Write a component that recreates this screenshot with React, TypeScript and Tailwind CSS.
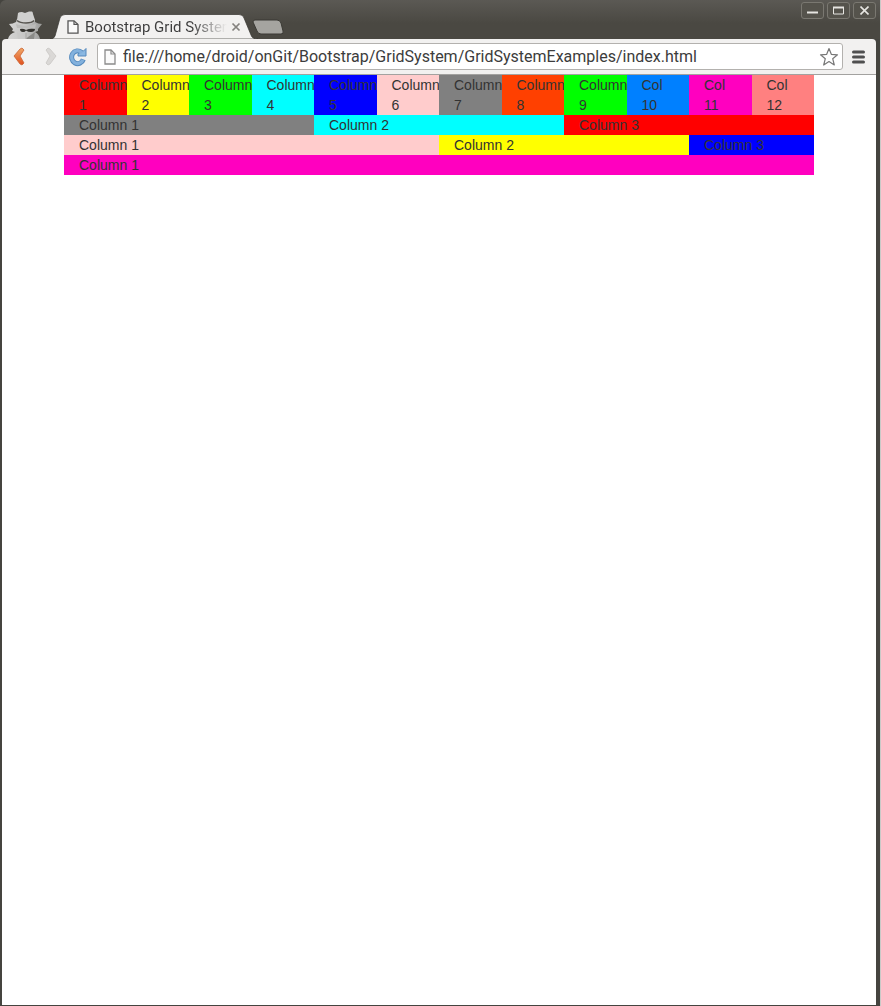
import React from "react";

type Column = { label: string; span: string; color: string };

const rows: Column[][] = [
  [
    { label: "Column 1", span: "col-span-1", color: "bg-[#ff0000]" },
    { label: "Column 2", span: "col-span-1", color: "bg-[#ffff00]" },
    { label: "Column 3", span: "col-span-1", color: "bg-[#00ff00]" },
    { label: "Column 4", span: "col-span-1", color: "bg-[#00ffff]" },
    { label: "Column 5", span: "col-span-1", color: "bg-[#0000ff]" },
    { label: "Column 6", span: "col-span-1", color: "bg-[#ffcccc]" },
    { label: "Column 7", span: "col-span-1", color: "bg-[#808080]" },
    { label: "Column 8", span: "col-span-1", color: "bg-[#ff4000]" },
    { label: "Column 9", span: "col-span-1", color: "bg-[#00ff00]" },
    { label: "Col 10", span: "col-span-1", color: "bg-[#0080ff]" },
    { label: "Col 11", span: "col-span-1", color: "bg-[#ff00bf]" },
    { label: "Col 12", span: "col-span-1", color: "bg-[#ff8080]" },
  ],
  [
    { label: "Column 1", span: "col-span-4", color: "bg-[#808080]" },
    { label: "Column 2", span: "col-span-4", color: "bg-[#00ffff]" },
    { label: "Column 3", span: "col-span-4", color: "bg-[#ff0000]" },
  ],
  [
    { label: "Column 1", span: "col-span-6", color: "bg-[#ffcccc]" },
    { label: "Column 2", span: "col-span-4", color: "bg-[#ffff00]" },
    { label: "Column 3", span: "col-span-2", color: "bg-[#0000ff]" },
  ],
  [{ label: "Column 1", span: "col-span-12", color: "bg-[#ff00bf]" }],
];

function Incognito() {
  return (
    <svg width="34" height="28" viewBox="0 0 34 28" className="block" aria-hidden="true">
      <defs>
        <linearGradient id="spy" x1="0" x2="1" y1="0" y2="0">
          <stop offset="0" stopColor="#d4d4d3" />
          <stop offset=".5" stopColor="#c6c6c5" />
          <stop offset="1" stopColor="#9b9b99" />
        </linearGradient>
      </defs>
      <path d="M0 28Q1 23 7 21L4 20 5 18 1 13Q5 13 8 11L9 8H26L27 11Q30 13 34 13L30 18 30 20 27 21Q31 23 32 28Z" fill="url(#spy)" />
      <path d="M9 9 10 2Q11 1 14 1L17 2 21 .5H24Q25 1 25 3L27 9Q27 13 18 13 8 13 9 9Z" fill="#d0d0cf" />
      <path d="M9 9.5Q12 12 18 12T26 9.5" fill="none" stroke="#55534e" strokeWidth="1.5" />
      <path d="M8 13Q18 17 28 13L27 17H9Z" fill="#bcbcba" />
      <path d="M12 18Q15 17 18 19 22 17 27 18 27 21 23 21 20 21 18 19.5 17 21 15 21 12 21 12 18Z" fill="#33322e" />
      <path d="M9 21 18 27.5 17 28H10Z" fill="#c9c9c8" />
      <path d="M27 21 18 27.5 19 28H26Z" fill="#8b8b88" />
      <path d="M18 22V28" stroke="#a6a6a4" />
    </svg>
  );
}

function PageIcon({ size }: { size: "small" | "large" }) {
  return (
    <svg width="12" height={size === "small" ? 14 : 16} viewBox="0 0 12 16" preserveAspectRatio="none" className="shrink-0" aria-hidden="true">
      <path d="M1 1H7L11 5V15H1Z" fill="#fafafa" stroke={size === "small" ? "#555" : "#8b8b8b"} strokeWidth="1.3" />
      <path d="M7 1V5H11" fill="none" stroke={size === "small" ? "#555" : "#8b8b8b"} strokeWidth="1.2" />
    </svg>
  );
}

function Chevron({ forward = false }: { forward?: boolean }) {
  return (
    <svg width="12" height="20" viewBox="0 0 12 20" className="block" aria-hidden="true">
      <defs>
        <linearGradient id="orange" x1="0" x2="0" y1="0" y2="1">
          <stop offset="0" stopColor="#f0a868" />
          <stop offset="1" stopColor="#e0501f" />
        </linearGradient>
      </defs>
      {forward ? (
        <path d="M1 3 3 1 5 2 11 9 5 17 3 18 1 16 5 9Z" fill="#dad8d6" stroke="#c9c7c4" strokeWidth=".8" />
      ) : (
        <path d="M11 3 9 1 7 2 1 9 7 17 9 18 11 16 7 9Z" fill="url(#orange)" stroke="#cb6434" strokeWidth=".8" />
      )}
    </svg>
  );
}

const frameButton =
  "flex h-[17px] w-[23px] items-center justify-center rounded-[3px] border border-[#7a7871] bg-[#55534c] text-[#e6e5e1]";

export default function App() {
  return (
    <div className="flex min-h-screen bg-[#3c3b37]">
      <div className="flex min-w-0 grow flex-col border-r border-[#c9c9c7] bg-[#45443f] pb-px pl-[2px] pr-1">
        <header className="-ml-[2px] -mr-1 flex h-[39px] items-end justify-between rounded-tl-md bg-linear-to-b from-[#5b5954] to-[#4a4842] to-60%">
          <div className="flex items-end">
            <div className="ml-2">
              <Incognito />
            </div>
            <div className="relative ml-2 flex h-[25px] w-[208px] items-center pl-[17px] pr-[14px]">
              <svg className="absolute inset-0" width="208" height="25" viewBox="0 0 208 25" aria-hidden="true">
                <path d="M0 25Q4 25 5 22L10 4Q11 .5 15 .5H189Q193 .5 194 4L201 21Q202 25 208 25Z" fill="#f2f1f0" stroke="#35342f" strokeWidth=".7" />
              </svg>
              <div className="relative flex min-w-0 grow items-center">
                <PageIcon size="small" />
                <span className="ml-[6px] w-[142px] overflow-hidden whitespace-nowrap bg-linear-to-r from-[#3c3c3c] from-75% to-transparent bg-clip-text font-[Roboto,sans-serif] text-[15px] leading-5 text-transparent">
                  Bootstrap Grid System
                </span>
                <button aria-label="Close tab" className="ml-[4px]">
                  <svg width="10" height="10" viewBox="0 0 10 10" className="block">
                    <path d="M1.5 1.5 8.5 8.5M8.5 1.5 1.5 8.5" stroke="#84827f" strokeWidth="1.7" />
                  </svg>
                </button>
              </div>
            </div>
            <button aria-label="New tab" className="-ml-[6px] mb-1">
              <svg width="32" height="16" viewBox="0 0 32 16" className="block">
                <path d="M3 1H25Q28 1 29 4L31 12Q32 15 29 15H9Q6 15 5 12L1 3Q1 1 3 1Z" fill="#a5a4a0" stroke="#3a3934" />
              </svg>
            </button>
          </div>
          <div className="mr-1 flex gap-[3px] self-start pt-[2px]">
            <button aria-label="Minimize" className={frameButton}>
              <svg width="11" height="9" viewBox="0 0 11 9"><path d="M0 6.5H11" stroke="currentColor" strokeWidth="2" /></svg>
            </button>
            <button aria-label="Maximize" className={frameButton}>
              <svg width="11" height="9" viewBox="0 0 11 9"><path d="M.5 1.5H10.5V8H.5Z" fill="none" stroke="currentColor" /><path d="M0 1.5H11" stroke="currentColor" strokeWidth="2" /></svg>
            </button>
            <button aria-label="Close" className={frameButton}>
              <svg width="9" height="9" viewBox="0 0 9 9"><path d="M.5.5 8.5 8.5M8.5.5.5 8.5" stroke="currentColor" strokeWidth="1.6" /></svg>
            </button>
          </div>
        </header>

        <nav className="flex h-9 items-center rounded-t-[4px] border-b border-[#a3a2a0] bg-[#f2f1f0] pl-[11px] pr-[11px]">
          <button aria-label="Back"><Chevron /></button>
          <button aria-label="Forward" className="ml-5"><Chevron forward /></button>
          <button aria-label="Reload" className="ml-[11px]">
            <svg width="19" height="20" viewBox="0 0 19 20" className="block">
              <path d="M13.5 5.4A6 6.4 0 1 0 15.3 12.4" fill="none" stroke="#5489bd" strokeWidth="5" />
              <path d="M18 1.5V9H10V7L12.5 5 15.5 4Z" fill="#8ab8e2" stroke="#5489bd" />
              <path d="M14 5.8A6 6.4 0 1 0 15 12.8" fill="none" stroke="#83b1dd" strokeWidth="3.2" />
            </svg>
          </button>
          <div className="ml-[10px] flex h-[27px] min-w-0 grow items-center rounded-[3px] border border-[#b3b1ae] bg-white pl-[6px] pr-[3px]">
            <PageIcon size="large" />
            <input
              aria-label="Address"
              defaultValue="file:///home/droid/onGit/Bootstrap/GridSystem/GridSystemExamples/index.html"
              className="ml-[7px] min-w-0 grow bg-transparent font-[Roboto,sans-serif] text-[16px] leading-6 text-[#3c3c3c] outline-none"
            />
            <button aria-label="Bookmark this page">
              <svg width="20" height="20" viewBox="0 0 20 20" className="block">
                <path d="M10 1.5 12.3 7.3 18.5 7.8 13.7 11.7 15.3 18 10 14.6 4.7 18 6.3 11.7 1.5 7.8 7.7 7.3Z" fill="#fff" stroke="#777" strokeWidth="1.2" strokeLinejoin="round" />
              </svg>
            </button>
          </div>
          <button aria-label="Menu" className="ml-[9px]">
            <svg width="13" height="14" viewBox="0 0 13 14" className="block">
              <path d="M1.5 2H11.5M1.5 7H11.5M1.5 12H11.5" stroke="#4f4f4f" strokeWidth="3" strokeLinecap="round" />
            </svg>
          </button>
        </nav>

        <main className="grow bg-white font-['Liberation_Sans',sans-serif] text-[14px] leading-5 text-[#333333]">
          <div className="mx-auto max-w-[750px]">
            {rows.map((row, i) => (
              <div key={i} className="grid grid-cols-12">
                {row.map((column) => (
                  <div key={column.label} className={`relative min-w-0 px-[15px] ${column.span} ${column.color}`}>
                    {column.label}
                  </div>
                ))}
              </div>
            ))}
          </div>
        </main>
      </div>
    </div>
  );
}
